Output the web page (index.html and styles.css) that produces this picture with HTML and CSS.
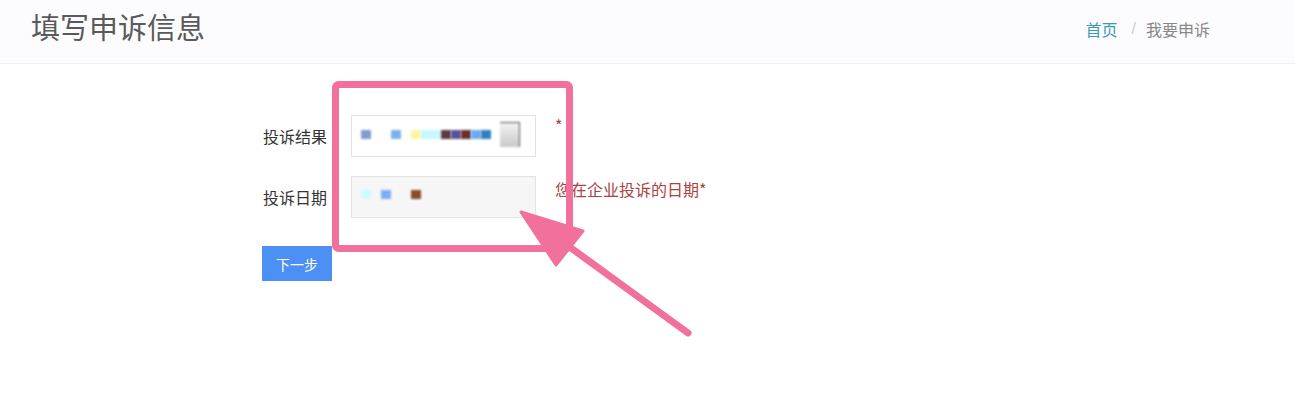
FILE: index.html
```html
<!DOCTYPE html>
<html lang="zh-CN">
<head>
<meta charset="utf-8">
<title>填写申诉信息</title>
<link rel="stylesheet" href="styles.css">
</head>
<body>
<header class="page-header">
  <h1 class="page-title">填写申诉信息</h1>
  <nav class="breadcrumb">
    <a class="crumb-link" href="#">首页</a>
    <span class="crumb-sep">/</span>
    <span class="crumb-current">我要申诉</span>
  </nav>
</header>
<main class="form-wrap">
  <div class="form-row">
    <label class="form-label">投诉结果</label>
    <div class="field field-white">
      <span class="blk" style="left:9px;background:#7f9bd0"></span>
      <span class="blk" style="left:39px;background:#7fb0ee"></span>
      <span class="blk" style="left:59px;background:#fff4a0"></span>
      <span class="blk" style="left:69px;width:20px;background:#c8f8ff"></span>
      <span class="blk" style="left:89px;background:#5a3a3c"></span>
      <span class="blk" style="left:99px;background:#5a4f9a"></span>
      <span class="blk" style="left:109px;background:#6b2f2a"></span>
      <span class="blk" style="left:119px;background:#6aaaf0"></span>
      <span class="blk" style="left:129px;background:#2f7fc0"></span>
      <span class="file-btn"></span>
    </div>
    <span class="help help-top">*</span>
  </div>
  <div class="form-row">
    <label class="form-label">投诉日期</label>
    <div class="field field-gray">
      <span class="blk blk2" style="left:9px;background:#d0fbff"></span>
      <span class="blk blk2" style="left:29px;background:#7ab0ee"></span>
      <span class="blk blk2" style="left:59px;background:#8b4a2a"></span>
    </div>
    <span class="help">您在企业投诉的日期*</span>
  </div>
  <button class="btn-next" type="button">下一步</button>
</main>
<svg class="annotation" width="1295" height="416" viewBox="0 0 1295 416">
  <rect x="335.5" y="84.5" width="234" height="164" rx="3" fill="none" stroke="#f2709c" stroke-width="7"/>
  <line x1="688" y1="333" x2="560" y2="240" stroke="#f2709c" stroke-width="7" stroke-linecap="round"/>
  <polygon points="521,212 583,231 556,265" fill="#f2709c" stroke="#f2709c" stroke-width="3" stroke-linejoin="round"/>
</svg>
</body>
</html>
```
FILE: styles.css
```css
html, body {
  margin: 0;
  padding: 0;
  background: #ffffff;
  font-family: "Noto Sans CJK SC", "Liberation Sans", sans-serif;
}
body {
  position: relative;
  width: 1295px;
  height: 416px;
  overflow: hidden;
}
.page-header {
  height: 63px;
  border-bottom: 1px solid #f0eff3;
  background: #fcfcfe;
  display: flex;
  align-items: center;
  justify-content: space-between;
  padding: 0 85px 0 31px;
}
.page-title {
  margin: 0;
  font-size: 29px;
  font-weight: normal;
  color: #5a5a5a;
  line-height: 1;
  margin-top: -10px;
}
.breadcrumb {
  display: flex;
  align-items: center;
  font-size: 16px;
  line-height: 1;
  margin-top: -6px;
}
.crumb-link {
  color: #3a9bb0;
  text-decoration: none;
}
.crumb-sep {
  color: #cccccc;
  padding: 0 10px 0 14px;
  font-family: "Liberation Sans", sans-serif;
}
.crumb-current {
  color: #888888;
}
.form-wrap {
  padding: 51px 0 0 262px;
}
.form-row {
  display: flex;
  align-items: flex-start;
  margin-bottom: 19px;
}
.form-label {
  width: 89px;
  height: 42px;
  line-height: 42px;
  font-size: 16px;
  color: #333333;
  padding-left: 1px;
  box-sizing: border-box;
}
.field {
  position: relative;
  width: 185px;
  height: 42px;
  box-sizing: border-box;
  border: 1px solid #e3e3e6;
}
.field-white {
  background: #ffffff;
}
.field-gray {
  background: #f6f6f7;
}
.blk {
  position: absolute;
  top: 14px;
  width: 10px;
  height: 9px;
  filter: blur(0.8px);
}
.blk2 {
  top: 13px;
}
.file-btn {
  position: absolute;
  left: 148px;
  top: 6px;
  width: 19px;
  height: 24px;
  border-top: 1px solid #555;
  border-right: 1px solid #555;
  background: linear-gradient(#f2f2f2, #c9c9c9);
  filter: blur(0.8px);
}
.help {
  margin-left: 19px;
  font-size: 16px;
  color: #a94442;
  line-height: 22px;
  margin-top: 2px;
}
.help-top {
  line-height: 16px;
  margin-top: 2px;
}
.btn-next {
  display: block;
  width: 70px;
  height: 35px;
  margin-top: 28px;
  border: none;
  background: #4d90f5;
  color: #ffffff;
  font-family: "Noto Sans CJK SC", "Liberation Sans", sans-serif;
  font-size: 14px;
  padding: 0;
}
.annotation {
  position: absolute;
  left: 0;
  top: 0;
  pointer-events: none;
}
```
